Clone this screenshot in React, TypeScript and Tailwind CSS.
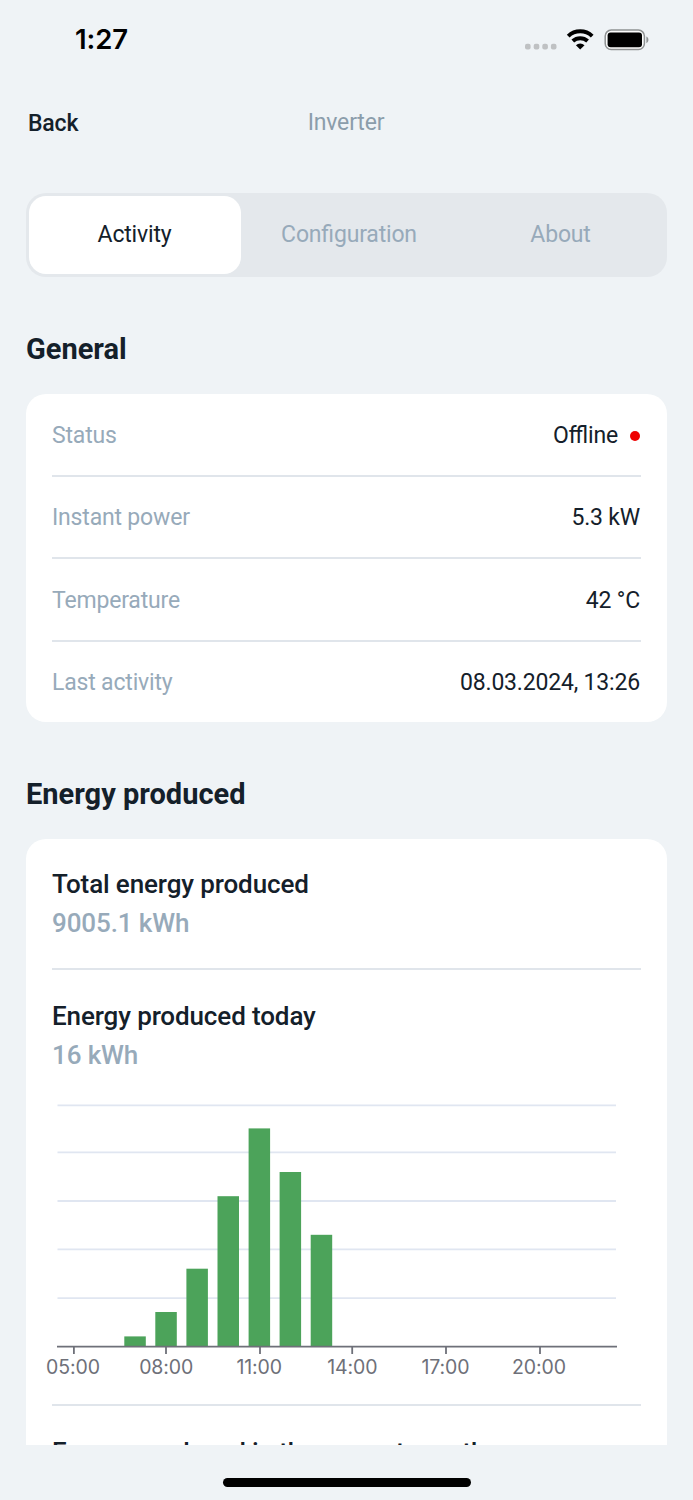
import React, { useState } from 'react';

interface DetailRow {
  label: string;
  value: string;
  offline?: boolean;
}

const TABS = ['Activity', 'Configuration', 'About'];

const GENERAL: DetailRow[] = [
  { label: 'Status', value: 'Offline', offline: true },
  { label: 'Instant power', value: '5.3 kW' },
  { label: 'Temperature', value: '42 °C' },
  { label: 'Last activity', value: '08.03.2024, 13:26' },
];

const TAB_WIDTHS = ['w-[212px] pr-px', 'w-[216px]', 'w-[207px]'];

// Hourly production, bar top measured in chart units
const BARS = [
  { hour: 7, x: 72.3, top: 246.4 },
  { hour: 8, x: 103.3, top: 222 },
  { hour: 9, x: 134.4, top: 178.7 },
  { hour: 10, x: 165.5, top: 106.2 },
  { hour: 11, x: 196.6, top: 38.4 },
  { hour: 12, x: 227.6, top: 82 },
  { hour: 13, x: 258.7, top: 144.8 },
];

const GRID_LINES = [15.4, 62.4, 111, 159.4, 208.1];

const TICKS = [
  { label: '05:00', x: 21.9, textX: 21 },
  { label: '08:00', x: 114, textX: 114.2 },
  { label: '11:00', x: 208, textX: 207.2 },
  { label: '14:00', x: 300.2, textX: 300.3 },
  { label: '17:00', x: 394, textX: 393.5 },
  { label: '20:00', x: 488, textX: 487 },
];

function StatusBar() {
  return (
    <div className="flex h-[80px] items-center justify-between pl-[75px] pr-[44px]">
      <span className="font-['Inter',sans-serif] text-[27.5px] font-semibold leading-none tracking-[-0.1px] text-black">
        1:27
      </span>
      <svg width="124" height="24" viewBox="0 0 124 24">
        <g fill="#bfc1c3">
          <rect x="0" y="15.8" width="5.6" height="5.6" rx="2" />
          <rect x="8.7" y="15.8" width="5.6" height="5.6" rx="2" />
          <rect x="17.3" y="15.8" width="5.6" height="5.6" rx="2" />
          <rect x="25.9" y="15.8" width="5.6" height="5.6" rx="2" />
        </g>
        <g fill="none" stroke="#000" strokeWidth="4">
          <path d="M43.2 8.1a17.6 17.6 0 0 1 24 0" />
          <path d="M47.8 13.1a11 11 0 0 1 14.8 0" />
        </g>
        <path d="M50.9 17.3a6.2 6.2 0 0 1 8.6 0L55.2 21.4Z" fill="#000" />
        <rect x="80.2" y="2.1" width="39.2" height="19.4" rx="6" fill="#fff" fillOpacity="0.8" stroke="#8f9293" strokeWidth="1.5" />
        <rect x="82.6" y="4.5" width="34.4" height="14.7" rx="3" fill="#000" />
        <path d="M121.4 8.4c2.7 1.2 2.7 5.6 0 6.8Z" fill="#8f9293" />
      </svg>
    </div>
  );
}

function EnergyItem({ title, value }: { title: string; value?: string }) {
  return (
    <div className="flex flex-col text-[26px] font-medium leading-[39px] tracking-[-0.12px]">
      <span className="text-[#14202a]">{title}</span>
      {value && <span className="text-[#97aaba]">{value}</span>}
    </div>
  );
}

function TodayChart() {
  return (
    <svg width="589" height="314" viewBox="0 0 589 314" className="block overflow-visible">
      {GRID_LINES.map((y) => (
        <line key={y} x1="5.5" x2="564" y1={y} y2={y} stroke="#e0e6f1" strokeWidth="1.8" />
      ))}
      {BARS.map((bar) => (
        <rect key={bar.hour} x={bar.x} y={bar.top} width="21.5" height={256.6 - bar.top} fill="#4ca35a" />
      ))}
      <line x1="5" x2="565" y1="256.7" y2="256.7" stroke="#6e7079" strokeWidth="1.8" />
      {TICKS.map((tick) => (
        <g key={tick.label}>
          <line x1={tick.x} x2={tick.x} y1="256.7" y2="264" stroke="#6e7079" strokeWidth="1.8" />
          <text
            x={tick.textX}
            y="283.7"
            textAnchor="middle"
            fill="#6e7079"
            className="font-['Inter',sans-serif] text-[19.5px] tracking-[-0.1px]"
          >
            {tick.label}
          </text>
        </g>
      ))}
    </svg>
  );
}

export default function App() {
  const [activeTab, setActiveTab] = useState('Activity');

  return (
    <div className="flex h-[1500px] w-[693px] flex-col overflow-hidden bg-[#eff3f6] font-['Roboto',sans-serif] [font-feature-settings:'liga'_1]">
      <StatusBar />

      {/* Navigation */}
      <header className="grid h-[86px] grid-cols-3 items-center px-7 text-[23px] tracking-[-0.18px]">
        <button className="justify-self-start pt-0.5 font-medium text-[#14202a]">Back</button>
        <h1 className="justify-self-center pr-px text-[#8b9dab]">Inverter</h1>
      </header>

      <main className="flex min-h-0 flex-1 flex-col px-[26px] pt-[27px]">
        {/* Tabs */}
        <div className="flex h-[84px] shrink-0 rounded-[20px] bg-[#e4e8ec] p-[3px]">
          {TABS.map((tab, idx) => (
            <button
              key={tab}
              onClick={() => setActiveTab(tab)}
              className={`${TAB_WIDTHS[idx]} rounded-[17px] text-[23px] tracking-[-0.18px] ${
                tab === activeTab ? 'bg-white text-[#14202a]' : 'text-[#97aaba]'
              }`}
            >
              {tab}
            </button>
          ))}
        </div>

        <h2 className="mt-[54px] text-[29px] font-bold leading-[36px] text-[#14202a]">General</h2>
        <section className="mt-[27px] flex h-[328px] shrink-0 flex-col rounded-[20px] bg-white px-[26px]">
          {GENERAL.map((row) => (
            <div
              key={row.label}
              className="flex flex-1 items-center justify-between border-b-2 border-[#e0e5eb] pt-[3px] text-[23px] tracking-[-0.18px] last:border-b-0"
            >
              <span className="text-[#97aaba]">{row.label}</span>
              <span className="flex items-center gap-3 pr-px text-[#14202a]">
                {row.value}
                {row.offline && <span className="h-2.5 w-2.5 rounded-full bg-[#ee0000]" />}
              </span>
            </div>
          ))}
        </section>

        <h2 className="mt-[54px] text-[29px] font-bold leading-[36px] text-[#14202a]">Energy produced</h2>
        <section className="mt-[27px] min-h-0 flex-1 overflow-hidden rounded-t-[20px] bg-white px-[26px]">
          <div className="border-b-2 border-[#e0e5eb] pb-[25px] pt-[26px]">
            <EnergyItem title="Total energy produced" value="9005.1 kWh" />
          </div>
          <div className="border-b-2 border-[#e0e5eb] pt-[27px]">
            <EnergyItem title="Energy produced today" value="16 kWh" />
            <div className="pt-[15px]">
              <TodayChart />
            </div>
          </div>
          <div className="pt-[27px]">
            <EnergyItem title="Energy produced in the current month" />
          </div>
        </section>
      </main>

      {/* Home indicator */}
      <footer className="flex h-[55px] shrink-0 justify-center pt-[33px]">
        <div className="h-[9px] w-[248px] rounded-full bg-black" />
      </footer>
    </div>
  );
}
